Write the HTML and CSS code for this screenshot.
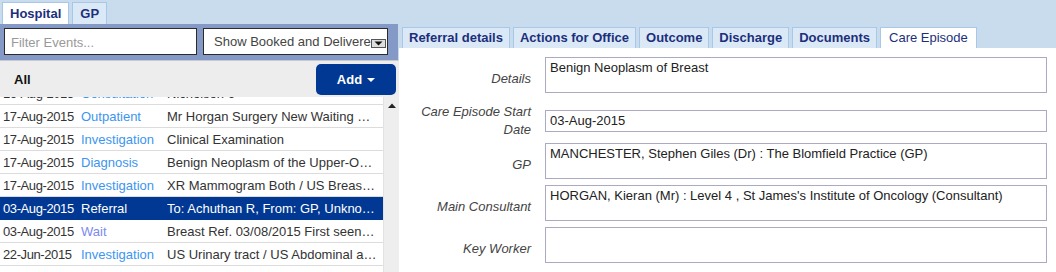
FILE: index.html
```html
<!DOCTYPE html>
<html>
<head>
<meta charset="utf-8">
<link rel="stylesheet" href="styles.css">
</head>
<body>
<div class="page">
  <div class="left">
    <div class="toptabs">
      <div class="ttab active">Hospital</div>
      <div class="ttab">GP</div>
    </div>
    <div class="filterbar">
      <div class="filter">Filter Events...</div>
      <div class="select">
        <span class="seltext">Show Booked and Delivere</span>
        <span class="selbtn"><svg width="9" height="5" viewBox="0 0 9 5"><path d="M0.5 0.5 H8.5 L4.5 4.5 Z" fill="#111"/></svg></span>
      </div>
    </div>
    <div class="listhead">
      <span class="all">All</span>
      <div class="addbtn">Add <svg width="8" height="4" viewBox="0 0 8 4"><path d="M0 0 H8 L4 4 Z" fill="#fff"/></svg></div>
    </div>
    <div class="listwrap">
      <div class="list">
        <div class="rows">
          <div class="row"><span class="d">16-Aug-2015</span><span class="t">Consultation</span><span class="x">Nicholson 6</span></div>
          <div class="row"><span class="d">17-Aug-2015</span><span class="t">Outpatient</span><span class="x">Mr Horgan Surgery New Waiting List</span></div>
          <div class="row"><span class="d">17-Aug-2015</span><span class="t">Investigation</span><span class="x">Clinical Examination</span></div>
          <div class="row"><span class="d">17-Aug-2015</span><span class="t">Diagnosis</span><span class="x">Benign Neoplasm of the Upper-Outer Quadrant</span></div>
          <div class="row"><span class="d">17-Aug-2015</span><span class="t">Investigation</span><span class="x">XR Mammogram Both / US Breast Both</span></div>
          <div class="row sel"><span class="d">03-Aug-2015</span><span class="t">Referral</span><span class="x">To: Achuthan R, From: GP, Unknown</span></div>
          <div class="row"><span class="d">03-Aug-2015</span><span class="t wait">Wait</span><span class="x">Breast Ref. 03/08/2015 First seen: 17/08/2015</span></div>
          <div class="row"><span class="d">22-Jun-2015</span><span class="t">Investigation</span><span class="x">US Urinary tract / US Abdominal and Pelvis</span></div>
          <div class="row"><span class="d">15-Jun-2015</span><span class="t">Outpatient</span><span class="x">GP Visit</span></div>
        </div>
      </div>
      <div class="scroll"><svg width="8" height="5" viewBox="0 0 8 5"><path d="M0 5 H8 L4 0.5 Z" fill="#222"/></svg></div>
    </div>
  </div>
  <div class="right">
    <div class="tabs">
      <div class="tab">Referral details</div>
      <div class="tab">Actions for Office</div>
      <div class="tab">Outcome</div>
      <div class="tab">Discharge</div>
      <div class="tab">Documents</div>
      <div class="tab active">Care Episode</div>
    </div>
    <div class="content">
      <div class="frow">
        <div class="label">Details</div>
        <div class="box">Benign Neoplasm of Breast</div>
      </div>
      <div class="frow two">
        <div class="label">Care Episode Start<br>Date</div>
        <div class="box single">03-Aug-2015</div>
      </div>
      <div class="frow">
        <div class="label">GP</div>
        <div class="box">MANCHESTER, Stephen Giles (Dr) : The Blomfield Practice (GP)</div>
      </div>
      <div class="frow">
        <div class="label">Main Consultant</div>
        <div class="box">HORGAN, Kieran (Mr) : Level 4 , St James's Institute of Oncology (Consultant)</div>
      </div>
      <div class="frow">
        <div class="label">Key Worker</div>
        <div class="box"></div>
      </div>
    </div>
  </div>
</div>
</body>
</html>
```
FILE: styles.css
```css
* { box-sizing: border-box; }
html, body { margin: 0; padding: 0; }
body {
  width: 1056px;
  height: 272px;
  overflow: hidden;
  background: #c9dcee;
  font-family: "Liberation Sans", Arial, sans-serif;
  font-size: 13px;
  color: #333;
}
.page { display: flex; height: 272px; }

.left { width: 399px; display: flex; flex-direction: column; }
.toptabs { display: flex; height: 24px; padding: 2px 0 0 2px; gap: 3px; }
.ttab {
  height: 22px;
  padding: 0 7px;
  border: 1px solid #a6c6ea;
  border-bottom: none;
  background: #dbe9f6;
  color: #1c2f7c;
  font-weight: bold;
  font-size: 13px;
  line-height: 22px;
}
.ttab.active { background: #fff; }

.filterbar {
  width: 398px;
  height: 37px;
  background: #8499c6;
  padding: 4px 0 0 4px;
  display: flex;
  gap: 6px;
  border-bottom: 1px solid #c9c9d2;
}
.filter {
  width: 193px;
  height: 27px;
  background: #fff;
  border: 1px solid #2b2b2b;
  color: #999;
  font-size: 13px;
  line-height: 27px;
  padding-left: 6px;
}
.select {
  width: 185px;
  height: 27px;
  background: #fff;
  border: 1px solid #2b2b2b;
  display: flex;
  align-items: flex-end;
  justify-content: space-between;
  padding: 0 1px 5px 10px;
  color: #444;
  font-size: 13px;
}
.seltext { line-height: 15px; }
.selbtn {
  width: 15px;
  height: 9px;
  background: #dedede;
  border: 1px solid #555;
  display: flex;
  align-items: center;
  justify-content: center;
  margin-bottom: 1px;
}

.listhead {
  height: 36px;
  background: #ededed;
  display: flex;
  align-items: center;
  justify-content: space-between;
  padding: 0 3px 0 14px;
}
.all { font-weight: bold; font-size: 13px; color: #111; }
.addbtn {
  width: 80px;
  height: 31px;
  margin-top: 1px;
  background: #003893;
  border-radius: 5px;
  color: #fff;
  font-weight: bold;
  font-size: 13px;
  display: flex;
  align-items: center;
  justify-content: center;
  gap: 5px;
}

.listwrap { flex: 1; display: flex; background: #fff; overflow: hidden; }
.list { width: 383px; overflow: hidden; }
.rows { margin-top: -15px; }
.row {
  height: 23px;
  display: grid;
  grid-template-columns: 78px 86px 1fr;
  align-items: center;
  padding: 0 6px 0 3px;
  border-bottom: 1px solid #dcdcdc;
  white-space: nowrap;
  font-size: 13px;
}
.row span { overflow: hidden; text-overflow: ellipsis; }
.row .d { color: #333; letter-spacing: -0.4px; }
.row .t { color: #3d95f0; }
.row .t.wait { color: #7c8af2; }
.row .x { color: #333; }
.row.sel { background: #003893; border-bottom-color: #003893; }
.row.sel span { color: #fff; }
.scroll {
  width: 16px;
  background: #eeeeee;
  border-left: 1px solid #e2e2e2;
  display: flex;
  justify-content: center;
  padding-top: 6px;
}
.scroll svg { display: block; }

.right { flex: 1; display: flex; flex-direction: column; }
.tabs { display: flex; height: 48px; padding: 27px 0 0 3px; gap: 3px; }
.tab {
  height: 21px;
  padding: 0 6px;
  border: 1px solid #a9c7e9;
  border-bottom: none;
  background: #dbe9f6;
  color: #1c2f7c;
  font-weight: bold;
  font-size: 13px;
  line-height: 20px;
}
.tab.active { background: #fff; font-weight: normal; padding: 0 8px; }

.content {
  flex: 1;
  background: #fff;
  padding: 9px 9px 0 0;
  display: flex;
  flex-direction: column;
  gap: 6px;
}
.frow {
  display: grid;
  grid-template-columns: 132px 1fr;
  column-gap: 14px;
  align-items: center;
}
.label {
  text-align: right;
  font-style: italic;
  color: #444;
  padding-top: 6px;
  line-height: 15px;
  font-size: 13px;
}
.frow.two { margin-top: 4px; margin-bottom: -2px; }
.frow.two .label { padding-top: 0; line-height: 18px; }
.box {
  height: 36px;
  border: 1px solid #aaaac0;
  padding: 2px 4px;
  color: #222;
  line-height: 15px;
  font-size: 13px;
}
.box.single { height: 22px; }
```
